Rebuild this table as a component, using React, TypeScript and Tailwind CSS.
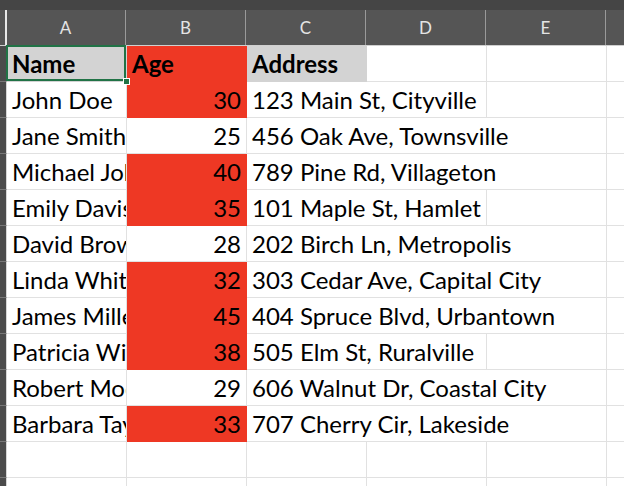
// address text in column C spills over into D (and E when long enough)
const rows: [string, number, string, number][] = [
  ["John Doe", 30, "123 Main St, Cityville", 2],
  ["Jane Smith", 25, "456 Oak Ave, Townsville", 3],
  ["Michael Johnson", 40, "789 Pine Rd, Villageton", 3],
  ["Emily Davis", 35, "101 Maple St, Hamlet", 2],
  ["David Brown", 28, "202 Birch Ln, Metropolis", 3],
  ["Linda White", 32, "303 Cedar Ave, Capital City", 3],
  ["James Miller", 45, "404 Spruce Blvd, Urbantown", 3],
  ["Patricia Wilson", 38, "505 Elm St, Ruralville", 2],
  ["Robert Moore", 29, "606 Walnut Dr, Coastal City", 3],
  ["Barbara Taylor", 33, "707 Cherry Cir, Lakeside", 3],
];

const cols = ["A", "B", "C", "D", "E", ""];

function RowHead() {
  return <div className="w-[7px] shrink-0 bg-[#4b4b4b] border-r border-r-[#d6d6d6] border-b border-b-[#777]" />;
}

function Empty() {
  return <div className="w-[120px] shrink-0 border-r border-b border-[#e1e1e1]" />;
}

export default function App() {
  return (
    <div className="w-[624px] h-[486px] overflow-hidden bg-white text-black" style={{ fontFamily: "Lato, 'Noto Sans', sans-serif" }}>
      {/* top band */}
      <div className="h-[10px] bg-[#454545]" />

      {/* column letters */}
      <div className="flex h-[36px] bg-[#555] border-b border-[#d0d0d0]">
        <div className="w-[7px] shrink-0 border-r-2 border-[#e8e8e8] mr-[-1px]" />
        {cols.map((c, i) => (
          <div
            key={i}
            className="w-[120px] shrink-0 border-r border-[#9a9a9a] flex items-center justify-center text-[17px] text-[#e4e4e4]"
          >
            {c}
          </div>
        ))}
      </div>

      {/* header row */}
      <div className="flex h-[36px] text-[24px] leading-[35px] font-bold">
        <RowHead />
        <div className="relative w-[120px] shrink-0 bg-[#d3d3d3] border-r border-b border-[#d3d3d3] pl-[5px]">
          Name
          <div className="absolute -left-[1px] -top-[1px] right-0 bottom-0 border-2 border-[#217346]" />
          <div className="absolute -right-[4px] -bottom-[4px] w-[7px] h-[7px] bg-[#217346] border border-white" />
        </div>
        <div className="w-[120px] shrink-0 bg-[#ee3824] border-r border-b border-[#ee3824] pl-[5px]">Age</div>
        <div className="w-[120px] shrink-0 bg-[#d3d3d3] border-r border-b border-[#d3d3d3] pl-[5px]">Address</div>
        <Empty />
        <Empty />
        <Empty />
      </div>

      {/* data */}
      {rows.map(([name, age, addr, span]) => {
        const hot = age >= 30;
        return (
          <div key={name} className="flex h-[36px] text-[24px] leading-[35px]">
            <RowHead />
            <div className="w-[120px] shrink-0 border-r border-b border-[#e1e1e1] pl-[5px] overflow-hidden whitespace-nowrap">
              {name}
            </div>
            <div
              className={
                hot
                  ? "w-[120px] shrink-0 bg-[#ee3824] border-r border-b border-[#ee3824] text-right pr-[5px]"
                  : "w-[120px] shrink-0 border-r border-b border-[#e1e1e1] text-right pr-[5px]"
              }
            >
              {age}
            </div>
            <div
              className={
                span === 3
                  ? "w-[360px] shrink-0 border-r border-b border-[#e1e1e1] pl-[5px] whitespace-nowrap"
                  : "w-[240px] shrink-0 border-r border-b border-[#e1e1e1] pl-[5px] whitespace-nowrap"
              }
            >
              {addr}
            </div>
            {span === 2 && <Empty />}
            <Empty />
          </div>
        );
      })}

      {/* empty rows */}
      {[0, 1].map((i) => (
        <div key={i} className="flex h-[36px]">
          <RowHead />
          {cols.map((c, j) => (
            <Empty key={j} />
          ))}
        </div>
      ))}
    </div>
  );
}
